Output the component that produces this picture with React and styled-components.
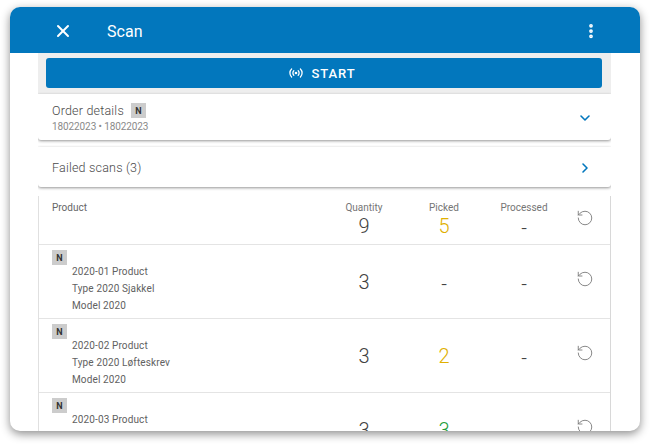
import React from 'react'
import styled, { createGlobalStyle } from 'styled-components'
import { X, EllipsisVertical, ChevronDown, ChevronRight, RotateCcw } from 'lucide-react'

const BLUE = '#0277bd'

const Global = createGlobalStyle`
  html, body { margin: 0; padding: 0; background: #fff; height: 100%; overflow: hidden; }
  body { font-family: Roboto, "Liberation Sans", sans-serif; color: #616161; }
`

const Page = styled.div`
  width: 650px;
  height: 445px;
  padding: 7px 10px 14px;
  box-sizing: border-box;
`

const Modal = styled.div`
  height: 424px;
  background: #fff;
  border-radius: 10px;
  overflow: hidden;
  box-shadow: 0 3px 10px rgba(0, 0, 0, 0.45);
  display: flex;
  flex-direction: column;
`

const Header = styled.header`
  flex: none;
  height: 46px;
  box-sizing: border-box;
  padding: 2px 40px 0 43px;
  background: ${BLUE};
  display: flex;
  align-items: center;
  color: #fff;
`

const Title = styled.h1`
  margin: 0 0 0 34px;
  flex: 1;
  font-size: 16px;
  font-weight: 400;
  letter-spacing: 0.05px;
`

const Content = styled.div`
  flex: 1;
  min-height: 0;
  overflow: hidden;
  margin: 0 29px 0 28px;
  display: flex;
  flex-direction: column;
`

const StartBar = styled.div`
  flex: none;
  background: #eeeeee;
  padding: 5px 9px 6px 8px;
`

const StartButton = styled.button`
  width: 100%;
  height: 30px;
  border: 0;
  border-radius: 3px;
  background: ${BLUE};
  color: #fff;
  font: 500 13px Roboto, sans-serif;
  letter-spacing: 0.95px;
  display: flex;
  align-items: center;
  justify-content: center;
  gap: 8px;
  padding: 0 3px 0 0;
`

const Card = styled.section`
  flex: none;
  box-sizing: border-box;
  height: ${p => p.$h}px;
  margin-bottom: ${p => p.$mb}px;
  background: #fff;
  border-radius: 0 0 3px 3px;
  box-shadow: 0 1px 3px rgba(0, 0, 0, 0.42);
  display: flex;
  align-items: center;
  justify-content: space-between;
  padding: 1px 18px 0 14px;
`

const CardTitle = styled.div`
  font-size: 12.5px;
  font-weight: 300;
  letter-spacing: 0.2px;
  color: #4a4a4a;
  display: flex;
  align-items: center;
  gap: 7px;
`

const CardSub = styled.div`
  margin-top: 3px;
  font-size: 10px;
  letter-spacing: -0.1px;
  color: #8a8a8a;
`

const Badge = styled.span`
  display: flex;
  align-items: center;
  justify-content: center;
  width: 15px;
  height: 15px;
  background: #cccccc;
  color: #333;
  font-size: 9px;
  font-weight: 700;
`

const Table = styled.div`
  flex: 1;
  min-height: 0;
  overflow: hidden;
  border-left: 1px solid #e0e0e0;
  border-right: 1px solid #d8d8d8;
`

const Row = styled.div`
  display: grid;
  grid-template-columns: 1fr 80px 80px 80px 46px;
  height: ${p => p.$h}px;
  box-sizing: border-box;
  border-bottom: 1px solid #e4e4e4;
`

const ProductHead = styled.div`
  font-size: 10px;
  padding: 6px 0 0 13px;
  color: #666;
`

const ProductCell = styled.div`
  padding: 5px 0 0 13px;
`

const ProductLines = styled.div`
  margin-top: -2px;
  padding-left: 20px;
  font-size: 10px;
  line-height: 17px;
  letter-spacing: 0.13px;
  color: #616161;
`

const NumCell = styled.div`
  display: flex;
  flex-direction: column;
  align-items: center;
  padding-top: ${p => p.$head ? 6 : 25}px;
`

const NumLabel = styled.div`
  font-size: 10px;
  line-height: 12px;
  color: #757575;
`

const Num = styled.div`
  font-size: 20px;
  line-height: 24px;
  font-weight: 300;
  color: ${p => p.$color || '#424242'};
  padding-top: ${p => p.children === '-' ? 2 : 0}px;
`

const ResetCell = styled.div`
  display: flex;
  justify-content: center;
  padding: ${p => p.$head ? 13 : 25}px 4px 0 0;
  color: #757575;
`

const Signal = () => (
  <svg width="14" height="10" viewBox="0 0 14 10" fill="none" stroke="#fff" strokeWidth="1.3" strokeLinecap="round">
    <circle cx="7" cy="5" r="1.3" fill="#fff" stroke="none" />
    <path d="M4.8 2.8a3.1 3.1 0 0 0 0 4.4M9.2 2.8a3.1 3.1 0 0 1 0 4.4" />
    <path d="M2.6 1a5.6 5.6 0 0 0 0 8M11.4 1a5.6 5.6 0 0 1 0 8" />
  </svg>
)

const YELLOW = '#e0b000'
const GREEN = '#1e9e3a'

const products = [
  { lines: ['2020-01 Product', 'Type 2020 Sjakkel', 'Model 2020'], qty: '3', picked: '-', done: '-' },
  { lines: ['2020-02 Product', 'Type 2020 Løfteskrev', 'Model 2020'], qty: '3', picked: '2', pickedColor: YELLOW, done: '-' },
  { lines: ['2020-03 Product', 'Type 2020 Sjakkel', 'Model 2020'], qty: '3', picked: '3', pickedColor: GREEN, done: '-' },
]

const App = () => (
  <Page>
    <Global />
    <Modal>
      <Header>
        <X size={20} strokeWidth={2.4} />
        <Title>Scan</Title>
        <EllipsisVertical size={18} strokeWidth={3} />
      </Header>
      <Content>
        <StartBar>
          <StartButton><Signal />START</StartButton>
        </StartBar>
        <Card $h={46} $mb={7}>
          <div>
            <CardTitle>Order details <Badge>N</Badge></CardTitle>
            <CardSub>18022023 • 18022023</CardSub>
          </div>
          <ChevronDown size={16} color={BLUE} strokeWidth={2.4} />
        </Card>
        <Card $h={40} $mb={9}>
          <CardTitle>Failed scans (3)</CardTitle>
          <ChevronRight size={16} color={BLUE} strokeWidth={2.4} />
        </Card>
        <Table>
          <Row $h={49}>
            <ProductHead>Product</ProductHead>
            <NumCell $head><NumLabel>Quantity</NumLabel><Num>9</Num></NumCell>
            <NumCell $head><NumLabel>Picked</NumLabel><Num $color={YELLOW}>5</Num></NumCell>
            <NumCell $head><NumLabel>Processed</NumLabel><Num>-</Num></NumCell>
            <ResetCell $head><RotateCcw size={18} strokeWidth={1.15} /></ResetCell>
          </Row>
          {products.map(p => (
            <Row $h={74} key={p.lines[0]}>
              <ProductCell>
                <Badge>N</Badge>
                <ProductLines>{p.lines.map(l => <div key={l}>{l}</div>)}</ProductLines>
              </ProductCell>
              <NumCell><Num>{p.qty}</Num></NumCell>
              <NumCell><Num $color={p.pickedColor}>{p.picked}</Num></NumCell>
              <NumCell><Num>{p.done}</Num></NumCell>
              <ResetCell><RotateCcw size={18} strokeWidth={1.15} /></ResetCell>
            </Row>
          ))}
        </Table>
      </Content>
    </Modal>
  </Page>
)

export default App
